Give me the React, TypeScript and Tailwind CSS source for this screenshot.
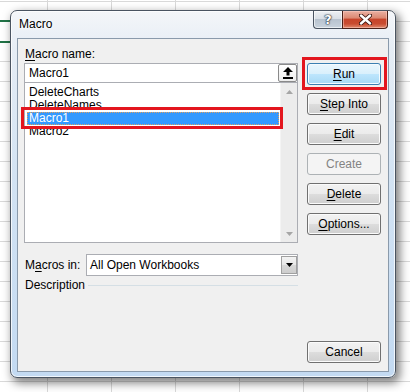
import React from "react";

const font = "font-['Liberation_Sans',Arial,sans-serif]";

function U({ children }: { children: React.ReactNode }) {
  return <span className="underline underline-offset-[2px] decoration-1">{children}</span>;
}

function Btn({
  children,
  kind = "normal",
}: {
  children: React.ReactNode;
  kind?: "normal" | "default" | "disabled";
}) {
  const base =
    "h-[22px] w-[74px] rounded-[3px] border flex items-center justify-center text-[12px] leading-[15px] select-none";
  const styles = {
    normal:
      "border-[#707070] text-black bg-[linear-gradient(#f2f2f2_0%,#ebebeb_50%,#dddddd_50%,#cfcfcf_100%)] shadow-[inset_0_0_0_1px_#fbfbfb]",
    default:
      "border-[#3c7fb1] text-black bg-[linear-gradient(#eaf6fd_0%,#d9f0fc_50%,#bee6fd_50%,#a7d9f5_100%)] shadow-[inset_0_0_0_1px_#f4fbff]",
    disabled: "border-[#adb2b5] text-[#838383] bg-[#f4f4f4]",
  };
  return <div className={`${base} ${styles[kind]}`}>{children}</div>;
}

function ScrollArrow({ up }: { up?: boolean }) {
  return (
    <div className="h-[17px] w-[17px] flex items-center justify-center">
      <svg width="7" height="4" viewBox="0 0 7 4">
        {up ? (
          <polygon points="3.5,0 7,4 0,4" fill="#a6a6a6" />
        ) : (
          <polygon points="0,0 7,0 3.5,4" fill="#a6a6a6" />
        )}
      </svg>
    </div>
  );
}

export default function App() {
  return (
    <div
      className={`relative w-[410px] h-[392px] overflow-hidden bg-white bg-[linear-gradient(to_right,#d9d9d9_1px,transparent_1px),linear-gradient(to_bottom,#d9d9d9_1px,transparent_1px)] bg-[length:64px_20px] bg-[position:47px_1px] ${font}`}
    >
      {/* Excel selected-cell green edges */}
      <div className="absolute left-0 top-[20px] w-[12px] h-[2px] bg-[#217346]" />
      <div className="absolute left-0 top-[41px] w-[12px] h-[2px] bg-[#217346]" />

      {/* Dialog window */}
      <div className="absolute left-[10px] top-[10px] w-[386px] h-[368px] rounded-[7px] border border-[#4a5461] bg-[linear-gradient(#f4f6f9_0%,#e6edf5_10%,#d3e3f3_45%,#c3daf2_100%)] shadow-[3px_4px_10px_1px_rgba(0,0,0,0.5),inset_0_0_0_1px_rgba(255,255,255,0.75)] flex flex-col px-[6px] pb-[5px]">
        {/* Title bar */}
        <div className="h-[27px] flex justify-between items-start">
          <div className="pl-[2px] h-[27px] flex items-center text-[12px] leading-[15px] text-black [text-shadow:0_0_6px_#ffffff,0_0_3px_#ffffff]">
            Macro
          </div>
          <div className="flex mr-[1px]">
            <div className="w-[29px] h-[18px] rounded-bl-[4px] border border-t-0 border-r-0 border-[#4a5461] bg-[linear-gradient(#eef1f4_0%,#d9dfe6_45%,#b8c3cf_50%,#c9d3dd_100%)] shadow-[inset_0_0_0_1px_rgba(255,255,255,0.6)] flex items-center justify-center">
              <span className="text-white font-bold text-[13px] leading-none font-['DejaVu_Sans',sans-serif] [text-shadow:0_0_1px_#1c2430,0_0_1px_#1c2430,0_0_2px_#1c2430]">
                ?
              </span>
            </div>
            <div className="w-[46px] h-[18px] rounded-br-[4px] border border-t-0 border-[#4a2018] bg-[linear-gradient(#eab0a2_0%,#dc8a74_40%,#c7452b_50%,#c84b30_75%,#e08a6e_100%)] shadow-[inset_0_0_0_1px_rgba(255,210,200,0.5)] flex items-center justify-center">
              <svg width="13" height="11" viewBox="0 0 13 11">
                <path d="M2 1.5 L11 9.5 M11 1.5 L2 9.5" stroke="#3a1510" strokeWidth="4.2" strokeLinecap="round" />
                <path d="M2 1.5 L11 9.5 M11 1.5 L2 9.5" stroke="#ffffff" strokeWidth="2.4" strokeLinecap="round" />
              </svg>
            </div>
          </div>
        </div>

        {/* Client area */}
        <div className="flex-1 border border-[#8a9aab] bg-[#f0f0f0] flex text-[12px] text-black">
          {/* Left column */}
          <div className="w-[280px] pl-[6px] pt-[8px] flex flex-col">
            <div className="h-[15px] leading-[15px] pl-[1px] mb-[1px]">
              <U>M</U>acro name:
            </div>
            <div className="h-[20px] border border-[#abadb3] bg-white flex items-start justify-between">
              <div className="pl-[4px] h-[18px] leading-[18px]">Macro1</div>
              <div className="w-[19px] h-[18px] rounded-[2px] border border-[#8a8a8a] bg-[linear-gradient(#ffffff,#ececec)] flex items-center justify-center">
                <svg width="10" height="12" viewBox="0 0 10 12">
                  <polygon points="5,0 10,5 6.5,5 6.5,8.5 3.5,8.5 3.5,5 0,5" fill="#000" />
                  <rect x="0" y="10" width="10" height="2" fill="#000" />
                </svg>
              </div>
            </div>
            <div className="h-[160px] border border-t-0 border-[#abadb3] bg-white flex">
              <div className="flex-1 pt-[3px] flex flex-col">
                <div className="h-[13px] leading-[13px] ml-[2px] mr-[1px] pl-[2px] whitespace-nowrap">DeleteCharts</div>
                <div className="h-[13px] leading-[13px] ml-[2px] mr-[1px] pl-[2px] whitespace-nowrap">DeleteNames</div>
                <div className="h-[13px] leading-[13px] ml-[2px] mr-[1px] pl-[2px] whitespace-nowrap bg-[#3399ff] text-white outline-1 outline-dotted outline-[#e0a060] -outline-offset-1">
                  Macro1
                </div>
                <div className="h-[13px] leading-[13px] ml-[2px] mr-[1px] pl-[2px] whitespace-nowrap">Macro2</div>
              </div>
              <div className="w-[17px] bg-[#ececec] border-l border-[#f4f4f4] flex flex-col justify-between">
                <ScrollArrow up />
                <ScrollArrow />
              </div>
            </div>

            <div className="mt-[11px] h-[22px] flex items-center">
              <div className="w-[62px] pl-[1px] leading-[15px]">
                M<U>a</U>cros in:
              </div>
              <div className="flex-1 h-[22px] border border-[#abadb3] bg-white flex items-center justify-between">
                <div className="pl-[3px] leading-[15px] whitespace-nowrap">All Open Workbooks</div>
                <div className="w-[16px] h-[18px] border border-[#a0a0a0] bg-[linear-gradient(#f3f3f3_0%,#e6e6e6_50%,#d7d7d7_50%,#cdcdcd_100%)] flex items-center justify-center">
                  <svg width="7" height="4" viewBox="0 0 7 4">
                    <polygon points="0,0 7,0 3.5,4" fill="#000" />
                  </svg>
                </div>
              </div>
            </div>

            <div className="mt-[2px] h-[15px] flex items-center">
              <div className="w-[64px] pl-[1px] leading-[15px]">Description</div>
              <div className="flex-1 h-px bg-[#d5dfe5]" />
            </div>
          </div>

          {/* Right column */}
          <div className="ml-[9px] w-[74px] pt-[24px] pb-[8px] flex flex-col">
            <div className="flex flex-col gap-[8px]">
              <Btn kind="default">
                <U>R</U>un
              </Btn>
              <Btn>
                <U>S</U>tep Into
              </Btn>
              <Btn>
                <U>E</U>dit
              </Btn>
              <Btn kind="disabled">Create</Btn>
              <Btn>
                <U>D</U>elete
              </Btn>
              <Btn>
                <U>O</U>ptions...
              </Btn>
            </div>
            <div className="mt-auto">
              <Btn>Cancel</Btn>
            </div>
          </div>
        </div>
      </div>

      {/* Red annotation boxes */}
      <div className="absolute left-[21px] top-[107px] w-[262px] h-[22px] border-[3px] border-[#e3161e]" />
      <div className="absolute left-[302px] top-[57px] w-[85px] h-[33px] border-[3px] border-[#e3161e]" />
    </div>
  );
}
